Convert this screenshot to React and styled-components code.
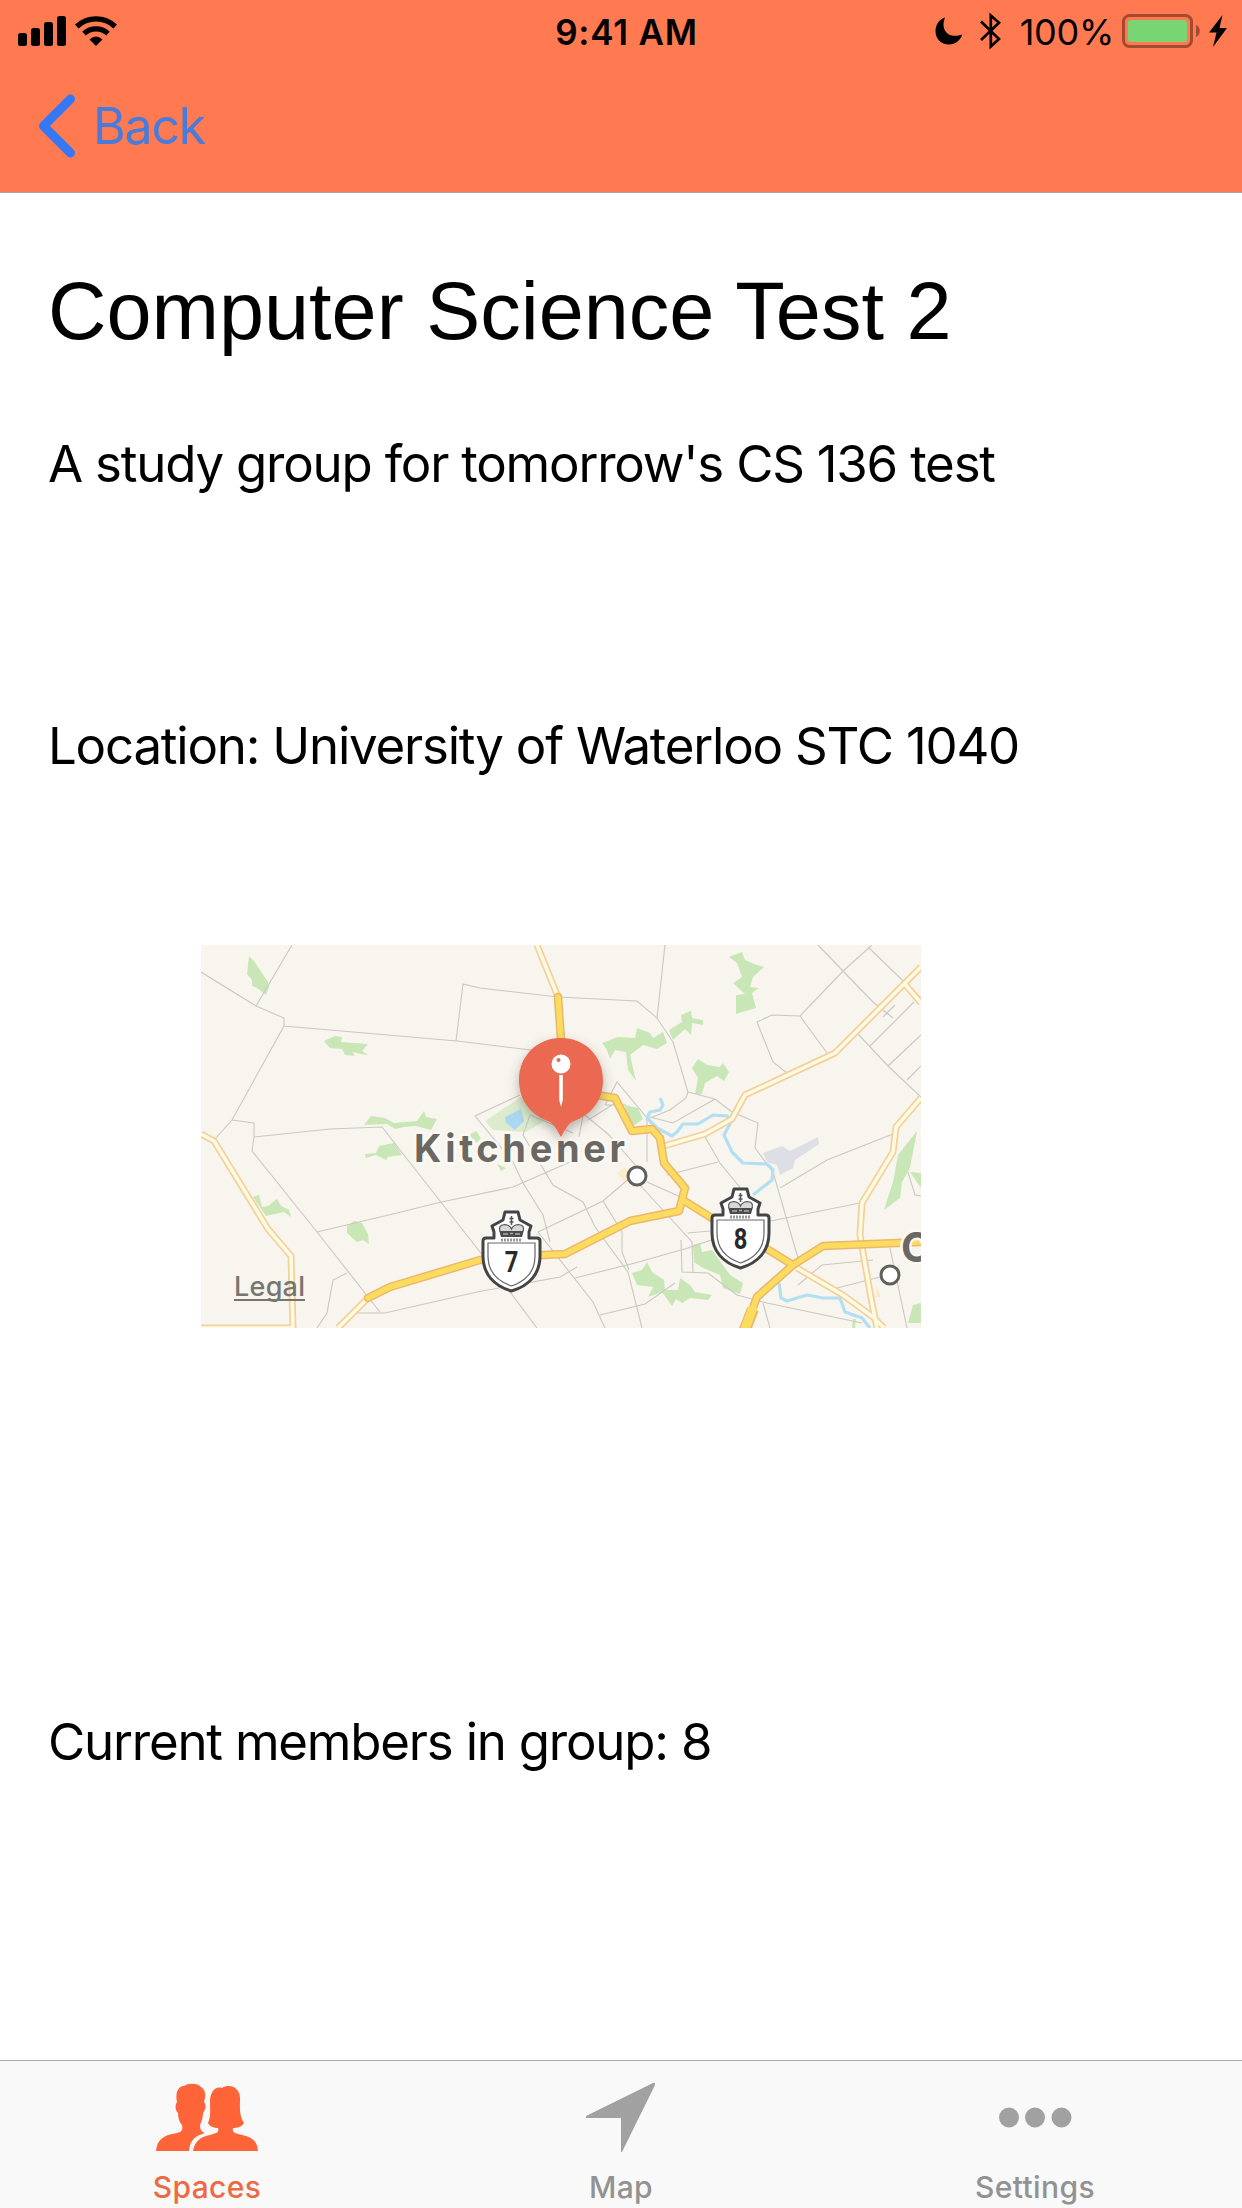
import React from "react";
import styled, { createGlobalStyle } from "styled-components";

const GlobalStyle = createGlobalStyle`
  body {
    margin: 0;
    background: #ffffff;
  }
`;

const Screen = styled.div`
  display: flex;
  flex-direction: column;
  width: 1242px;
  height: 2208px;
  overflow: hidden;
  background: #ffffff;
  color: #000000;
  font-family: Inter, "Liberation Sans", sans-serif;
`;

const Header = styled.header`
  height: 193px;
  box-sizing: border-box;
  background: #ff7a50;
  border-bottom: 1px solid #b3a39c;
`;

const StatusBar = styled.div`
  display: grid;
  grid-template-columns: 1fr auto 1fr;
  align-items: center;
  height: 60px;
  padding: 0 15px 0 18px;
`;

const StatusGroup = styled.div`
  display: flex;
  align-items: center;
  justify-content: ${(props) => props.$align || "flex-start"};
`;

const Clock = styled.span`
  font-size: 35px;
  font-weight: 600;
  line-height: 60px;
  letter-spacing: 0.8px;
  padding: 1px 0 0 8px;
`;

const Percent = styled.span`
  font-size: 36px;
  line-height: 60px;
  letter-spacing: -0.3px;
  margin: 2px 8px 0 18px;
`;

const BackButton = styled.button`
  display: flex;
  align-items: center;
  height: 132px;
  padding: 0 0 0 38px;
  border: 0;
  background: none;
  color: #477bdc;
  font-family: inherit;
  font-size: 50px;
  letter-spacing: -1.2px;
`;

const BackLabel = styled.span`
  margin-left: 17px;
`;

const Content = styled.main`
  flex: 1;
  display: flex;
  flex-direction: column;
  align-items: flex-start;
  padding: 70px 48px 0;
`;

const Title = styled.h1`
  margin: 0;
  font-family: "Liberation Sans", Arial, sans-serif;
  font-size: 81px;
  font-weight: 400;
  line-height: 96px;
  white-space: nowrap;
`;

const Line = styled.p`
  margin: ${(props) => props.$top}px 0 0;
  font-size: 51px;
  line-height: 62px;
  letter-spacing: -1.22px;
  white-space: nowrap;
`;

const MapView = styled.div`
  width: 720px;
  height: 383px;
  margin: 168px 0 0 153px;
  overflow: hidden;

  svg {
    display: block;
  }
`;

const TabBar = styled.nav`
  display: grid;
  grid-template-columns: repeat(3, 414px);
  height: 148px;
  box-sizing: border-box;
  border-top: 1px solid #acacac;
  background: #f9f9f9;
`;

const Tab = styled.a`
  display: flex;
  flex-direction: column;
  align-items: center;
  padding-top: 20px;
  font-size: 30px;
  font-weight: 500;
  line-height: 36px;
  letter-spacing: 0.4px;
  color: ${(props) => (props.$active ? "#ee6a45" : "#929292")};

  svg {
    margin-bottom: 14px;
  }
`;

const Signal = () => (
  <svg width="48" height="32" viewBox="0 0 48 32">
    <rect x="0" y="18" width="9" height="13" rx="2.5" />
    <rect x="13" y="13" width="9" height="18" rx="2.5" />
    <rect x="26" y="7" width="9" height="24" rx="2.5" />
    <rect x="39" y="1" width="9" height="30" rx="2.5" />
  </svg>
);

const WifiSvg = styled.svg`
  margin-left: 9px;
`;

const Wifi = () => (
  <WifiSvg width="42" height="32" viewBox="0 0 42 32">
    <g fill="none" stroke="#000" strokeWidth="5.2">
      <path d="M1.8 11.5 A28 28 0 0 1 40.2 11.5" />
      <path d="M9 18.7 A17.5 17.5 0 0 1 33 18.7" />
    </g>
    <path d="M14.5 24.5 Q21 18.5 27.5 24.5 L21 31 Z" />
  </WifiSvg>
);

const Moon = () => (
  <svg width="28" height="28" viewBox="0 0 28 28">
    <path d="M10 0.5 C5 13 13.5 22.5 27.3 17.5 C25.5 23.5 20 27.5 14 27.5 C6 27.5 0.5 21.5 0.5 14.2 C0.5 7.5 4.5 2.2 10 0.5 Z" />
  </svg>
);

const BluetoothSvg = styled.svg`
  margin-left: 17px;
`;

const Bluetooth = () => (
  <BluetoothSvg width="22" height="38" viewBox="0 0 22 38">
    <path
      d="M1 9.5 L19 27 L10.8 34.5 V3.5 L19 10.7 L1 28"
      fill="none"
      stroke="#000"
      strokeWidth="2.7"
    />
  </BluetoothSvg>
);

const Battery = () => (
  <svg width="78" height="34" viewBox="0 0 78 34">
    <rect x="1.5" y="1.5" width="68" height="31" rx="6" fill="none" stroke="#a34a30" strokeWidth="3" />
    <rect x="6" y="6" width="59" height="22" rx="3" fill="#79d574" />
    <path d="M74 11 C79 13 79 21 74 23 Z" fill="#a34a30" />
  </svg>
);

const BoltSvg = styled.svg`
  margin-left: 9px;
`;

const Bolt = () => (
  <BoltSvg width="18" height="32" viewBox="0 0 18 32">
    <path d="M13.5 0 L0 17.5 H7.5 L4 32 L18 13 H10.5 Z" />
  </BoltSvg>
);

const Chevron = () => (
  <svg width="38" height="64" viewBox="0 0 38 64">
    <path
      d="M32.5 5 L5.5 32 L32.5 59"
      fill="none"
      stroke="#3478f6"
      strokeWidth="9"
      strokeLinecap="round"
      strokeLinejoin="round"
    />
  </svg>
);

const People = () => (
  <svg width="104" height="74" viewBox="0 0 104 74">
    <g fill="#ff6438">
      <path d="M1 70 C2 59 8 54 22 52 C27 51 28 49 27 44 C24 41 23 36 23 32 C20 29 20 24 22 21 C20 12 23 5 29 5 C33 2 43 2 46 6 C51 9 51 15 49 21 C52 24 50 30 48 32 C48 37 46 42 45 44 C45 49 47 51 50 52 C40 55 35 59 34 70 Z" />
      <path d="M38 70 C40 59 46 56 55 54 C63 52 64 51 63 47 C59 47 54 45 53 42 C56 36 55 28 55 21 C55 11 60 5 67 7 C75 2 85 7 85 17 C85 27 84 34 89 42 C87 46 82 47 78 47 C77 51 79 52 83 53 C97 56 102 59 103 70 Z" />
    </g>
  </svg>
);

const Arrow = () => (
  <svg width="70" height="74" viewBox="0 0 70 74">
    <path d="M0 35 L67 2 L69 2 V4 L36 71 H35 V37 H0 Z" fill="#a1a1a1" />
  </svg>
);

const Dots = () => (
  <svg width="74" height="74" viewBox="0 0 74 74">
    <g fill="#a1a1a1">
      <circle cx="11" cy="36.5" r="10" />
      <circle cx="37" cy="36.5" r="10" />
      <circle cx="63.5" cy="36.5" r="10" />
    </g>
  </svg>
);

const parks = [
  "M48 11 L53 16 L67 37 L68 42 L65 50 L56 43 L51 41 L51 35 L46 29 Z",
  "M123 96 L134 91 L141 92 L140 97 L167 99 L161 106 L166 109 L165 110 L151 107 L154 111 L144 110 L141 104 L129 103 Z",
  "M163 180 L170 171 L184 173 L193 178 L216 176 L223 166 L225 172 L236 174 L230 185 L215 181 L203 182 L194 184 L186 179 Z",
  "M164 209 L175 208 L178 201 L193 198 L201 210 L187 212 L185 215 L175 210 L165 213 Z",
  "M52 252 L58 250 L61 262 L67 261 L76 254 L80 261 L88 265 L90 272 L83 267 L65 271 Z",
  "M146 281 L153 276 L161 278 L167 289 L168 299 L162 295 L156 297 L146 288 Z",
  "M528 12 L541 7 L544 15 L556 20 L563 22 L552 32 L549 42 L558 43 L551 48 L555 63 L535 69 L535 50 L544 49 L532 38 L541 32 L536 18 Z",
  "M480 70 L490 66 L491 73 L502 75 L502 80 L491 78 L490 90 L484 84 L472 95 L468 85 L481 77 Z",
  "M401 98 L417 92 L434 93 L436 83 L449 88 L452 93 L462 87 L466 98 L456 104 L442 100 L429 110 L435 136 L427 125 L425 107 L414 105 L409 114 L406 105 Z",
  "M497 114 L506 120 L519 122 L522 118 L528 127 L523 136 L516 131 L504 138 L501 149 L494 149 L497 133 L491 123 Z",
  "M492 300 L499 298 L501 307 L511 305 L529 330 L542 338 L539 349 L522 343 L519 330 L502 323 L493 317 Z",
  "M431 328 L441 325 L446 317 L451 327 L463 335 L464 345 L477 345 L479 333 L489 340 L494 347 L511 350 L507 355 L489 353 L481 358 L475 354 L471 361 L461 347 L447 352 L452 342 L436 340 Z",
  "M716 186 L709 223 L701 237 L699 253 L683 265 L692 237 L697 210 Z",
  "M424 160 L437 163 L442 174 L434 180 L425 176 Z",
  "M709 227 L720 228 V243 Z",
  "M712 360 L720 358 V378 L707 378 Z",
  "M652 374 H655 L654 383 H651 Z",
  "M268 190 L275 186 L280 193 L276 198 Z",
  "M296 219 L305 223 L300 226 Z",
];

const lanes = [
  "M0 27 L55 61 L83 73 V81 L31 175 L13 195 M83 81 L256 96 L330 105 M55 61 L91 0 M31 175 L53 178 V192 L129 184 L181 182 L279 307 L336 383 M53 192 L51 206 L116 287 L179 367",
  "M146 328 L132 335 L126 368 L116 383 M157 368 H184 L276 347 L359 332 L376 322",
  "M116 287 L196 268 L236 258 L312 242 L369 217 M255 96 L262 39 L279 43 L357 52 L436 56 L456 73 L472 97 L487 147 L485 153 L469 165 L449 173",
  "M464 0 L456 73 M487 147 L514 154 L531 167 L557 178 L554 203 M449 172 L472 178 L514 154",
  "M319 150 L274 171 L312 217 L322 238 L342 270 L349 297 M329 170 L322 190 L352 240 L382 257 L394 282 L427 327 L441 383",
  "M384 170 L408 190 L436 222 M404 160 L416 137 L446 173 V217 M384 160 L378 192 M416 157 L387 175 M329 170 L372 188 M404 160 L425 160",
  "M337 287 L402 256 L430 232 M337 287 L392 357 L404 383 M402 256 L421 287 V307 L428 325 M439 240 L471 275 L491 297 L492 327 M446 237 L482 253",
  "M374 333 L434 318 L487 303 L560 278 L659 258 M399 370 L444 359 L474 338 M487 288 L509 286 M480 295 L481 327 L507 328 L536 350 L566 358 L661 378 M562 358 L569 383",
  "M504 192 L519 218 L541 245 M466 230 L517 217 M554 203 L572 227 L599 320 M579 243 L626 215 L692 189",
  "M617 0 L642 26 L672 57 L692 73 M671 0 L642 26 L599 71 L626 108 M599 71 L571 70 L556 77 L572 117 L586 128 M667 2 L720 53",
  "M657 89 L687 121 L720 152 M669 101 L713 57 M687 121 L720 90 M706 135 L720 121 M682 72 L694 60",
  "M597 340 L621 320 L672 315 M636 343 L679 332 M689 303 L706 383 M707 227 L714 250 L720 251",
];

const mainRoads = [
  "M0 189 L13 196 L67 284 L90 311 L92 383",
  "M336 0 L357 52",
  "M137 383 L167 353",
  "M463 201 L504 189 L531 174 L544 150 L634 108 L720 22",
  "M703 38 L720 58",
  "M720 153 L695 182 L692 207 L661 258 L659 290 L670 353 L676 383",
  "M596 323 L642 350 L672 372 L683 383",
  "M0 383 H92",
];

const highways = [
  "M357 52 L360 95",
  "M167 353 L189 342 L279 315 L342 310 L364 309 L429 276 L478 266 L484 243 L463 218 L459 193 L451 184 L431 186 L414 153 L396 150",
  "M482 255 L509 272 L566 304 L592 320 L622 301 L720 297",
  "M592 320 L556 352 L543 387",
];

const rivers = [
  "M459 153 L462 160 L459 165 L449 167 L446 173 L456 183 L471 191 L476 187 L482 179 L497 179 L512 170 L526 171 L530 177 L523 190 L531 207 L542 218 L566 219 L572 225 L571 235 L552 250",
  "M578 338 L580 353 L586 356 L606 350 L622 353 L639 353 L644 367 L661 373 L669 383",
];

const Shield = ({ x, y, number }) => (
  <g transform={`translate(${x} ${y})`}>
    <path
      d="M24 2 H37 L39 10 L50 16 L48 22 V28 H56 Q59 28 59 31 V46 C59 64 48 76 30.5 81 C13 76 2 64 2 46 V31 Q2 28 5 28 H13 V22 L11 16 L22 10 Z"
      fill="#fff"
      stroke="#444446"
      strokeWidth="3"
      strokeLinejoin="round"
    />
    <path
      d="M7 33 H54 V46 C54 61 45 71 30.5 76 C16 71 7 61 7 46 Z"
      fill="none"
      stroke="#666"
      strokeWidth="1.2"
    />
    <path d="M18 20 H43 L41 27 H20 Z" fill="#4b4b4b" />
    <path
      d="M19 21 C16 13 28 13 30.5 19 C33 13 45 13 42 21"
      fill="#d8d8d8"
      stroke="#555"
      strokeWidth="1.2"
    />
    <path d="M22 24 H27 M29 23.5 H32 M34 24 H39" stroke="#aaa" strokeWidth="1.4" />
    <path d="M20 30 H41" stroke="#999" strokeWidth="3" strokeDasharray="2 1" />
    <path d="M30.5 6 V15 M28.5 8.5 H32.5 M28.5 12 H32.5" stroke="#555" strokeWidth="1.5" />
    <text
      transform="translate(30.5 62) scale(0.82 1)"
      textAnchor="middle"
      fontFamily="Roboto, sans-serif"
      fontSize="29"
      fontWeight="700"
      fill="#292929"
    >
      {number}
    </text>
  </g>
);

const StudyMap = () => (
  <svg width="720" height="383" viewBox="0 0 720 383">
    <defs>
      <filter id="pinShadow" x="-30%" y="-30%" width="160%" height="170%">
        <feDropShadow dx="0" dy="5" stdDeviation="6" floodColor="#4b4b43" floodOpacity="0.4" />
      </filter>
    </defs>
    <rect width="720" height="383" fill="#f8f5ee" />
    <path d="M284 176 L320 152 L345 175 L325 187 L292 185 Z" fill="#dcebcd" />
    <g fill="#c9e6b6">
      {parks.map((d) => (
        <path key={d} d={d} />
      ))}
    </g>
    <path d="M304 172 L320 164 L323 176 L314 185 L305 178 Z" fill="#aad8f0" />
    <path
      d="M562 208 L581 201 L589 206 L617 192 L618 199 L594 215 L592 223 L579 230 L576 220 L566 217 Z"
      fill="#dddfe5"
    />
    <path d="M416 228 L424 222 L430 232 L424 238 Z M676 342 L680 352 L674 352 Z" fill="#fbeccb" />
    <g fill="none" stroke="#cac8c2" strokeWidth="1.1">
      {lanes.map((d) => (
        <path key={d} d={d} />
      ))}
    </g>
    <g fill="none" stroke="#b2dff1" strokeWidth="3.2" strokeLinejoin="round">
      {rivers.map((d) => (
        <path key={d} d={d} />
      ))}
    </g>
    <g fill="none" strokeLinejoin="round">
      {mainRoads.map((d) => (
        <path key={d} d={d} stroke="#f2d19e" strokeWidth="7" />
      ))}
      {mainRoads.map((d) => (
        <path key={d} d={d} stroke="#fffae0" strokeWidth="3.5" />
      ))}
      {highways.map((d) => (
        <path key={d} d={d} stroke="#edb66c" strokeWidth="8.5" strokeLinecap="round" />
      ))}
      {highways.map((d) => (
        <path key={d} d={d} stroke="#fbdc5e" strokeWidth="5.5" strokeLinecap="round" />
      ))}
      <path d="M552 364 L543 387" stroke="#edb66c" strokeWidth="12" />
      <path d="M552 362 L543 387" stroke="#fbdc5e" strokeWidth="9" />
    </g>
    <g fill="#fff" stroke="#62605d" strokeWidth="3">
      <circle cx="436" cy="231" r="9" />
      <circle cx="689" cy="330" r="9" />
    </g>
    <g
      fontFamily="Inter, sans-serif"
      fontWeight="700"
      fill="#6b6762"
      stroke="#fbf9f4"
      strokeWidth="5"
      paintOrder="stroke"
      strokeLinejoin="round"
    >
      <text x="213" y="217" fontSize="38" textLength="211">
        Kitchener
      </text>
      <text x="700" y="317" fontSize="41">
        C
      </text>
    </g>
    <Shield x={280} y={265} number="7" />
    <Shield x={509} y={242} number="8" />
    <g filter="url(#pinShadow)">
      <path
        d="M360 93 C384 93 402 111 402 135 C402 156 390 170 371 177 C366 180 363 187 360 192 C357 187 354 180 349 177 C330 170 318 156 318 135 C318 111 336 93 360 93 Z"
        fill="#eb6751"
      />
    </g>
    <circle cx="360" cy="119" r="9.5" fill="#fff" />
    <circle cx="357.5" cy="115" r="2" fill="#eb6751" />
    <path d="M358.2 130 H361.8 V155 L360 162 L358.2 155 Z" fill="#fff" />
    <text x="33" y="351" fontFamily="Inter, sans-serif" fontSize="27" fontWeight="500" fill="#777570" textLength="71">
      Legal
    </text>
    <path d="M33 355 H104" stroke="#777570" strokeWidth="2" />
  </svg>
);

const App = () => {
  return (
    <Screen>
      <GlobalStyle />
      <Header>
        <StatusBar>
          <StatusGroup>
            <Signal />
            <Wifi />
          </StatusGroup>
          <Clock>9:41 AM</Clock>
          <StatusGroup $align="flex-end">
            <Moon />
            <Bluetooth />
            <Percent>100%</Percent>
            <Battery />
            <Bolt />
          </StatusGroup>
        </StatusBar>
        <BackButton>
          <Chevron />
          <BackLabel>Back</BackLabel>
        </BackButton>
      </Header>
      <Content>
        <Title>Computer Science Test 2</Title>
        <Line $top={74}>A study group for tomorrow's CS 136 test</Line>
        <Line $top={220}>Location: University of Waterloo STC 1040</Line>
        <MapView>
          <StudyMap />
        </MapView>
        <Line $top={383}>Current members in group: 8</Line>
      </Content>
      <TabBar>
        <Tab $active>
          <People />
          Spaces
        </Tab>
        <Tab>
          <Arrow />
          Map
        </Tab>
        <Tab>
          <Dots />
          Settings
        </Tab>
      </TabBar>
    </Screen>
  );
};

export default App;
